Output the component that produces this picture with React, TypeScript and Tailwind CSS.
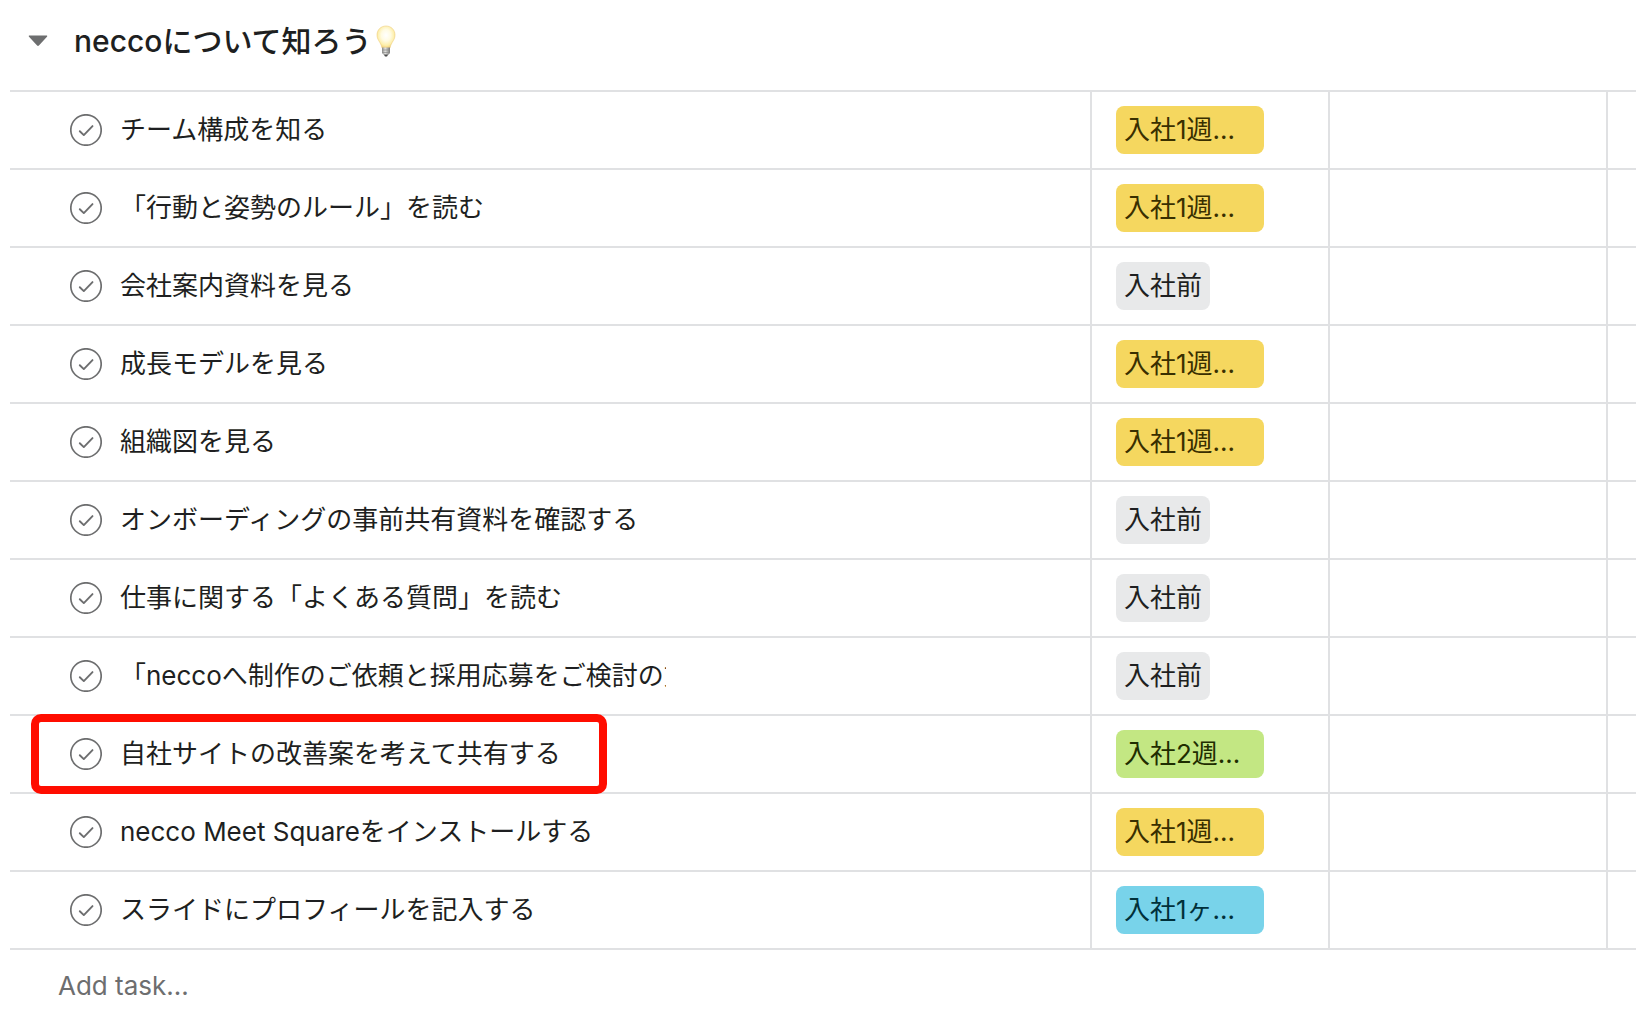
import { useState } from "react";

type TagColor = "yellow" | "gray" | "green" | "blue";

interface Task {
  name: string;
  tag: string;
  color: TagColor;
  highlighted?: boolean;
}

const tasks: Task[] = [
  { name: "チーム構成を知る", tag: "入社1週...", color: "yellow" },
  { name: "「行動と姿勢のルール」を読む", tag: "入社1週...", color: "yellow" },
  { name: "会社案内資料を見る", tag: "入社前", color: "gray" },
  { name: "成長モデルを見る", tag: "入社1週...", color: "yellow" },
  { name: "組織図を見る", tag: "入社1週...", color: "yellow" },
  { name: "オンボーディングの事前共有資料を確認する", tag: "入社前", color: "gray" },
  { name: "仕事に関する「よくある質問」を読む", tag: "入社前", color: "gray" },
  { name: "「neccoへ制作のご依頼と採用応募をご検討の方へ", tag: "入社前", color: "gray" },
  { name: "自社サイトの改善案を考えて共有する", tag: "入社2週...", color: "green", highlighted: true },
  { name: "necco Meet Squareをインストールする", tag: "入社1週...", color: "yellow" },
  { name: "スライドにプロフィールを記入する", tag: "入社1ヶ...", color: "blue" },
];

const tagStyles: Record<TagColor, string> = {
  yellow: "w-[148px] bg-[#f5d75f] text-[#392f00]",
  gray: "bg-[#e8e9ea] text-[#1e1f21]",
  green: "w-[148px] bg-[#c3e783] text-[#1f2d00]",
  blue: "w-[148px] bg-[#78d3ea] text-[#00303a]",
};

function CheckCircle() {
  return (
    <svg viewBox="0 0 32 32" className="size-8" fill="none" stroke="currentColor" aria-hidden="true">
      <circle cx="16" cy="16" r="15.2" strokeWidth="1.7" />
      <path d="M9.8 17.2l4 3.9 8.7-9" strokeWidth="1.9" strokeLinecap="round" strokeLinejoin="round" />
    </svg>
  );
}

function LightBulb() {
  return (
    <svg viewBox="0 0 20 32" className="h-8 w-5" role="img" aria-label="電球">
      <defs>
        <radialGradient id="glass" cx="50%" cy="42%" r="58%">
          <stop offset="0" stopColor="#ffffff" />
          <stop offset="0.45" stopColor="#fffbe2" />
          <stop offset="0.8" stopColor="#fdeea8" />
          <stop offset="1" stopColor="#f2cf78" />
        </radialGradient>
        <linearGradient id="base" x1="0" x2="1" y1="0" y2="0">
          <stop offset="0" stopColor="#8a8a88" />
          <stop offset="0.4" stopColor="#e2e2e0" />
          <stop offset="1" stopColor="#777775" />
        </linearGradient>
      </defs>
      <path
        d="M10 1C4.800 1 1 4.900 1 10c0 3.100 1.400 5.200 2.800 7.400C5 19.300 5.600 21 6 23h8c.4-2 1-3.700 2.200-5.600C17.600 15.200 19 13.100 19 10c0-5.100-3.800-9-9-9z"
        fill="url(#glass)"
        stroke="#efcf82"
        strokeWidth="0.6"
      />
      <path d="M6 22.500h8v5.500l-1.500 1.800h-5L6 28z" fill="url(#base)" />
      <path d="M6.200 25h7.600M6.200 27.500h7.600" stroke="#8d8d8b" strokeWidth="0.7" />
      <path d="M7.800 29.500h4.400L11 31.600H9z" fill="#4b4b4b" />
    </svg>
  );
}

function TaskRow({ task }: { task: Task }) {
  const [done, setDone] = useState(false);

  return (
    <tr className="h-[78px]">
      <td className="relative border-b-2 border-[#e0e1e3] p-0 pl-[60px]">
        <div className="flex items-center gap-[18px]">
          <button
            type="button"
            aria-label={`${task.name}を完了にする`}
            aria-pressed={done}
            onClick={() => setDone(!done)}
            className={done ? "text-[#58a182]" : "text-[#6d6e6f]"}
          >
            <CheckCircle />
          </button>
          <span className="w-[546px] overflow-hidden whitespace-nowrap">{task.name}</span>
        </div>
        {task.highlighted && (
          <div className="pointer-events-none absolute -top-0.5 left-[21px] h-20 w-[576px] rounded-[10px] border-8 border-[#ff0d00]" />
        )}
      </td>
      <td className="border-b-2 border-l-2 border-[#e0e1e3] p-0 pl-6">
        <div className="flex">
          <span className={`h-12 rounded-lg px-2 leading-[48px] whitespace-nowrap ${tagStyles[task.color]}`}>
            {task.tag}
          </span>
        </div>
      </td>
      <td className="border-b-2 border-l-2 border-[#e0e1e3] p-0" />
      <td className="border-b-2 border-l-2 border-[#e0e1e3] p-0" />
    </tr>
  );
}

export default function App() {
  const [open, setOpen] = useState(true);

  return (
    <main
      lang="ja"
      className="min-h-screen overflow-hidden bg-white pl-2.5 font-[Inter,'Noto_Sans_CJK_JP',sans-serif] text-[26px] leading-10 text-[#1e1f21]"
    >
      <header className="flex h-[90px] items-center pb-2 pl-4">
        <button
          type="button"
          aria-label="セクションを折りたたむ"
          aria-expanded={open}
          onClick={() => setOpen(!open)}
          className="flex size-6 items-center justify-center text-[#6d6e6f]"
        >
          <svg viewBox="0 0 20 12" className="h-3 w-5" fill="currentColor" aria-hidden="true">
            <path d="M1.500 0.500h17c.8 0 1 .7.5 1.200l-8.100 8.800c-.5.500-1.300.5-1.800 0L1 1.700C.5 1.200.7.500 1.500.500z" />
          </svg>
        </button>
        <h2 className="ml-6 flex items-center gap-1 text-[30px] font-medium">
          neccoについて知ろう
          <LightBulb />
        </h2>
      </header>

      {open && (
        <>
          <table className="w-full table-fixed border-separate border-spacing-0 border-t-2 border-[#e0e1e3]">
            <colgroup>
              <col />
              <col className="w-[238px]" />
              <col className="w-[278px]" />
              <col className="w-[30px]" />
            </colgroup>
            <tbody>
              {tasks.map((task) => (
                <TaskRow key={task.name} task={task} />
              ))}
            </tbody>
          </table>
          <button type="button" className="ml-12 flex h-[72px] items-center text-[#6d6e6f]">
            Add task...
          </button>
        </>
      )}
    </main>
  );
}
